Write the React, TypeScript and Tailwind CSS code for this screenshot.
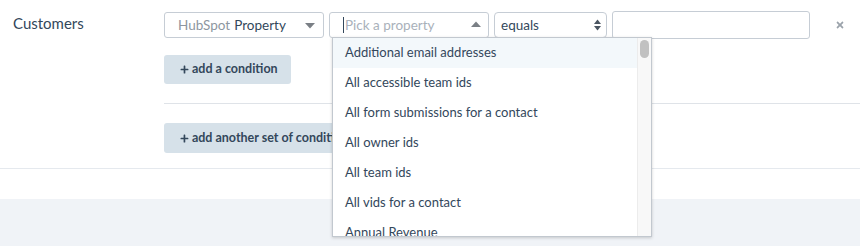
import React from 'react';
import { FaPlus, FaTimes } from 'react-icons/fa';

const options = [
  'Additional email addresses',
  'All accessible team ids',
  'All form submissions for a contact',
  'All owner ids',
  'All team ids',
  'All vids for a contact',
  'Annual Revenue',
  'Associated Company ID',
];

const CaretDown = () => (
  <svg width="10" height="6" viewBox="0 0 10 6" className="absolute right-[8px] top-[10px]">
    <path d="M0 0h10L5 5.5z" fill="#7a7f85" />
  </svg>
);

const CaretUp = () => (
  <svg width="10" height="6" viewBox="0 0 10 6" className="absolute right-[8px] top-[9px]">
    <path d="M0 6h10L5 0.5z" fill="#7a7f85" />
  </svg>
);

const App: React.FC = () => {
  return (
    <div className="w-[860px] h-[246px] bg-white overflow-hidden text-[#33475b]" style={{ fontFamily: 'Lato, "Open Sans", sans-serif' }}>
      {/* rule group */}
      <div className="flex border-b border-[#e5e9ee] pt-[11px] pb-[15px]">
        <div className="w-[164px] shrink-0 pl-[13px] pt-[3px] text-[15px] leading-[18px] text-[#33475b]">Customers</div>

        <div className="flex-1 flex flex-col">
          <div className="flex items-center gap-[5px] h-[28px]">
            <div className="relative w-[160px] h-[26px] border border-[#c6cdd5] rounded-[3px] flex items-center pl-[13px] text-[13.5px]">
              <span className="text-[#8d96a0]">HubSpot</span>
              <span className="ml-[4px] text-[#33475b]">Property</span>
              <CaretDown />
            </div>

            <div className="relative w-[160px] h-[26px]">
              <div className="w-full h-full border border-[#c6cdd5] rounded-[3px] flex items-center pl-[14px] text-[13.5px] text-[#a9b1ba]">
                <span className="w-px h-[16px] bg-[#33475b] -ml-[1px] mr-[1px]" />
                Pick a property
              </div>
              <CaretUp />

              {/* dropdown menu */}
              <div className="absolute left-[3px] top-[25px] w-[320px] h-[200px] bg-white border border-[#c2c8cf] shadow-[0_1px_3px_rgba(0,0,0,0.18)] flex z-10 overflow-hidden">
                <div className="flex-1 flex flex-col">
                  {options.map((o, i) => (
                    <div
                      key={o}
                      className={`h-[30px] shrink-0 flex items-center pl-[12px] text-[13px] text-[#33475b] ${i === 0 ? 'bg-[#f3f8fb]' : ''}`}
                    >
                      {o}
                    </div>
                  ))}
                </div>
                <div className="w-[14px] bg-[#f8f8f8] border-l border-[#ececec] flex justify-center pt-[2px]">
                  <div className="w-[9px] h-[18px] rounded-full bg-[#c1c1c1]" />
                </div>
              </div>
            </div>

            <div className="relative w-[113px] h-[26px] border border-[#c6cdd5] rounded-[4px] flex items-center pl-[6px] text-[13.5px] text-[#33475b]">
              equals
              <svg width="7" height="12" viewBox="0 0 7 12" className="absolute right-[5px] top-[6px]">
                <path d="M0 5L3.5 0.5L7 5z" fill="#4a5561" />
                <path d="M0 7L3.5 11.5L7 7z" fill="#4a5561" />
              </svg>
            </div>

            <div className="w-[198px] h-[28px] border border-[#c6cdd5] rounded-[3px] bg-white" />

            <FaTimes className="ml-[20px] text-[#9ba3ab]" size={10} />
          </div>

          <button className="mt-[16px] w-[127px] h-[29px] rounded-[3px] bg-[#d6e1e9] flex items-center pl-[16px] text-[12.5px] font-bold text-[#33475b]">
            <FaPlus size={9} className="mr-[3px]" />
            add a condition
          </button>

          <div className="mt-[19px] h-px bg-[#dfe3e8]" />

          <button className="mt-[19px] w-[190px] h-[30px] rounded-[3px] bg-[#d6e1e9] flex items-center pl-[16px] text-[12.5px] font-bold text-[#33475b] whitespace-nowrap overflow-hidden">
            <FaPlus size={9} className="mr-[3px]" />
            add another set of conditions
          </button>
        </div>
      </div>

      <div className="h-[30px] bg-white" />
      <div className="h-[60px] bg-[#f0f3f7]" />
    </div>
  );
};

export default App;
